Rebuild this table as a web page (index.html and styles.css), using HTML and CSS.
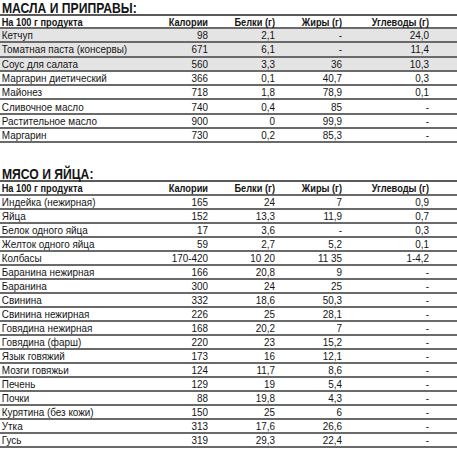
FILE: index.html
```html
<!DOCTYPE html>
<html lang="ru">
<head>
<meta charset="utf-8">
<title>Калорийность продуктов</title>
<link rel="stylesheet" href="styles.css">
</head>
<body>
<section class="block oils">
  <h2 class="title"><span>МАСЛА И ПРИПРАВЫ:</span></h2>
  <div class="row head"><span>На 100 г продукта</span><span>Калории</span><span>Белки (г)</span><span>Жиры (г)</span><span>Углеводы (г)</span></div>
  <div class="row shade"><span>Кетчуп</span><span>98</span><span>2,1</span><span>-</span><span>24,0</span></div>
  <div class="row shade"><span>Томатная паста (консервы)</span><span>671</span><span>6,1</span><span>-</span><span>11,4</span></div>
  <div class="row shade"><span>Соус для салата</span><span>560</span><span>3,3</span><span>36</span><span>10,3</span></div>
  <div class="row"><span>Маргарин диетический</span><span>366</span><span>0,1</span><span>40,7</span><span>0,3</span></div>
  <div class="row"><span>Майонез</span><span>718</span><span>1,8</span><span>78,9</span><span>0,1</span></div>
  <div class="row"><span>Сливочное масло</span><span>740</span><span>0,4</span><span>85</span><span>-</span></div>
  <div class="row"><span>Растительное масло</span><span>900</span><span>0</span><span>99,9</span><span>-</span></div>
  <div class="row"><span>Маргарин</span><span>730</span><span>0,2</span><span>85,3</span><span>-</span></div>
</section>
<section class="block meat">
  <h2 class="title"><span>МЯСО И ЯЙЦА:</span></h2>
  <div class="row head"><span>На 100 г продукта</span><span>Калории</span><span>Белки (г)</span><span>Жиры (г)</span><span>Углеводы (г)</span></div>
  <div class="row"><span>Индейка (нежирная)</span><span>165</span><span>24</span><span>7</span><span>0,9</span></div>
  <div class="row"><span>Яйца</span><span>152</span><span>13,3</span><span>11,9</span><span>0,7</span></div>
  <div class="row"><span>Белок одного яйца</span><span>17</span><span>3,6</span><span>-</span><span>0,3</span></div>
  <div class="row"><span>Желток одного яйца</span><span>59</span><span>2,7</span><span>5,2</span><span>0,1</span></div>
  <div class="row"><span>Колбасы</span><span>170-420</span><span>10 20</span><span>11 35</span><span>1-4,2</span></div>
  <div class="row"><span>Баранина нежирная</span><span>166</span><span>20,8</span><span>9</span><span>-</span></div>
  <div class="row"><span>Баранина</span><span>300</span><span>24</span><span>25</span><span>-</span></div>
  <div class="row"><span>Свинина</span><span>332</span><span>18,6</span><span>50,3</span><span>-</span></div>
  <div class="row"><span>Свинина нежирная</span><span>226</span><span>25</span><span>28,1</span><span>-</span></div>
  <div class="row"><span>Говядина нежирная</span><span>168</span><span>20,2</span><span>7</span><span>-</span></div>
  <div class="row"><span>Говядина (фарш)</span><span>220</span><span>23</span><span>15,2</span><span>-</span></div>
  <div class="row"><span>Язык говяжий</span><span>173</span><span>16</span><span>12,1</span><span>-</span></div>
  <div class="row"><span>Мозги говяжьи</span><span>124</span><span>11,7</span><span>8,6</span><span>-</span></div>
  <div class="row"><span>Печень</span><span>129</span><span>19</span><span>5,4</span><span>-</span></div>
  <div class="row"><span>Почки</span><span>88</span><span>19,8</span><span>4,3</span><span>-</span></div>
  <div class="row"><span>Курятина (без кожи)</span><span>150</span><span>25</span><span>6</span><span>-</span></div>
  <div class="row"><span>Утка</span><span>313</span><span>17,6</span><span>26,6</span><span>-</span></div>
  <div class="row"><span>Гусь</span><span>319</span><span>29,3</span><span>22,4</span><span>-</span></div>
</section>
</body>
</html>
```
FILE: styles.css
```css
html, body {
  margin: 0;
  padding: 0;
  background: #fff;
}
body {
  width: 457px;
  font-family: "Liberation Sans", Arial, sans-serif;
  color: #141414;
  overflow: hidden;
}
.title {
  margin: 0;
  height: 16px;
  box-sizing: border-box;
  padding-left: 2px;
  font-size: 15px;
  font-weight: bold;
  line-height: 16px;
  border-bottom: 2px solid #5a5a5a;
}
.title span {
  display: inline-block;
  transform: scaleX(0.81);
  transform-origin: left center;
}
.row {
  display: grid;
  grid-template-columns: 150px 58px 67px 67px 87px 1fr;
  align-items: center;
  box-sizing: border-box;
  border-bottom: 2px solid #6a6a6a;
  font-size: 11px;
  line-height: 12px;
}
.row span {
  text-align: right;
  white-space: nowrap;
  transform: scaleX(0.9);
  transform-origin: right center;
}
.row span:first-child {
  text-align: left;
  padding-left: 2px;
  transform-origin: left center;
}
.head {
  font-weight: bold;
}
.head span {
  transform: scaleX(0.84);
}
.shade {
  background: #e4e4e4;
}
.oils .row {
  height: 14.3px;
}
.oils .head {
  height: 13px;
}
.meat {
  margin-top: 22.7px;
}
.meat .row {
  height: 14px;
}
```
